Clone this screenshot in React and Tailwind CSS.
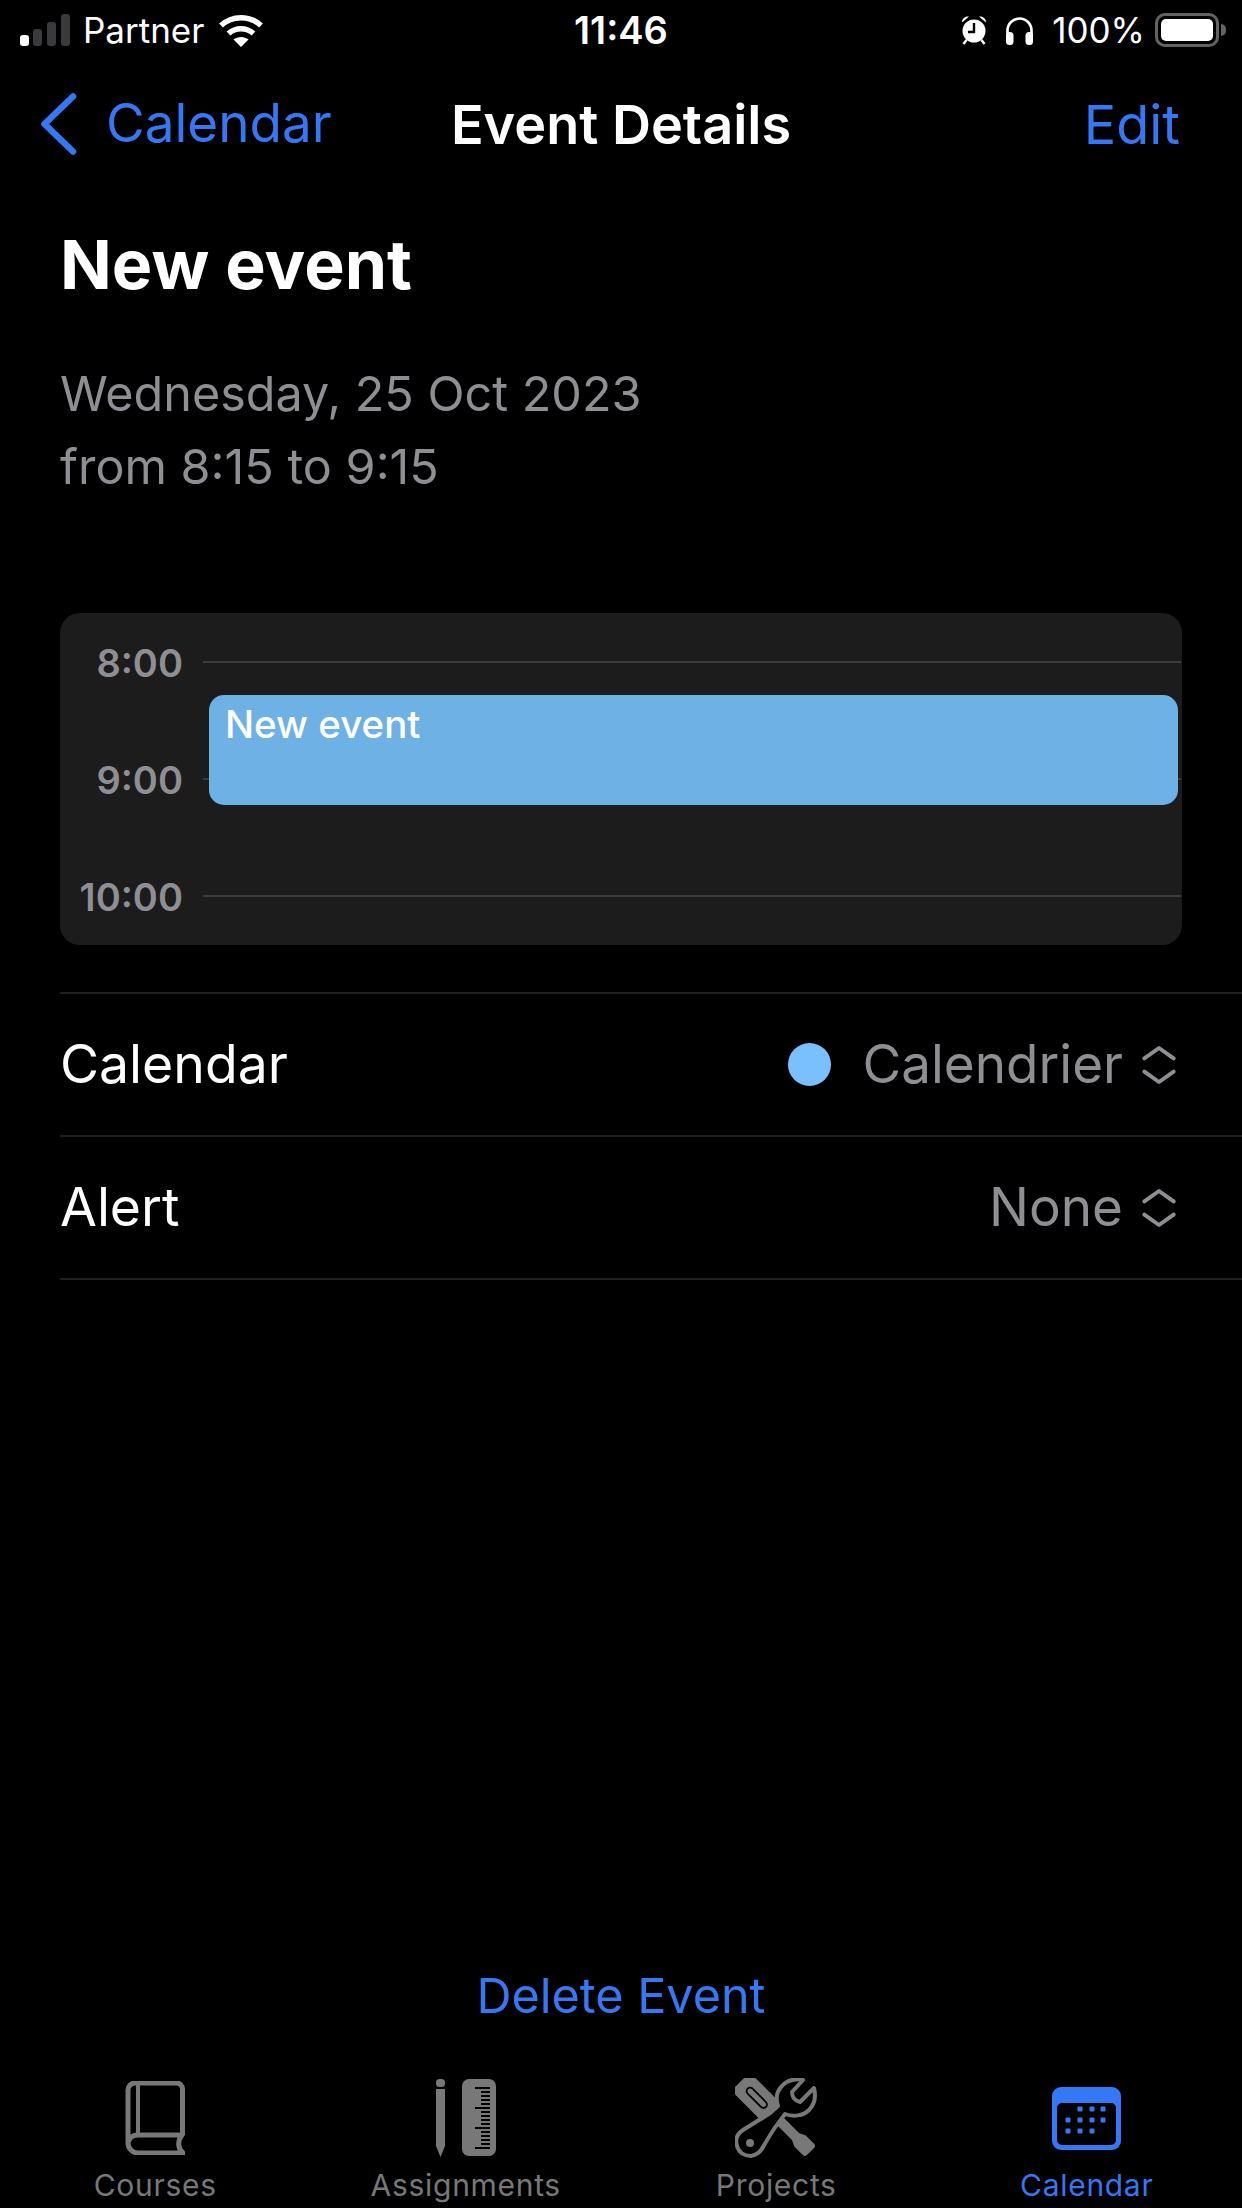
import React from "react";

const FONT = { fontFamily: "Inter, 'Noto Sans', sans-serif" };

function SignalBars() {
  return (
    <svg width="50" height="32" viewBox="0 0 50 32">
      <rect x="0" y="21" width="9" height="11" rx="3" fill="#fff" />
      <rect x="13" y="15" width="9" height="17" rx="3" fill="#3a3a3c" />
      <rect x="27" y="8" width="9" height="24" rx="3" fill="#3a3a3c" />
      <rect x="41" y="0" width="9" height="32" rx="3" fill="#3a3a3c" />
    </svg>
  );
}

function Wifi() {
  return (
    <svg width="46" height="33" viewBox="0 0 46 33" fill="none" stroke="#fff" strokeWidth="5.5">
      <path d="M3 11.5C14 1 32 1 43 11.5" />
      <path d="M10.5 19.5C17.5 13 28.5 13 35.5 19.5" />
      <path d="M23 33l-7.5-7.5c4-3.5 11-3.5 15 0z" fill="#fff" stroke="none" />
    </svg>
  );
}

function Alarm() {
  return (
    <svg width="26" height="30" viewBox="0 0 26 30">
      <circle cx="13" cy="16" r="11.5" fill="#fff" />
      <path d="M13 8v9H7" fill="none" stroke="#000" strokeWidth="2.4" />
      <path d="M1 7.500C1 3.500 4 1 8 1.500zM25 7.500C25 3.500 22 1 18 1.500z" fill="#fff" />
      <path d="M5.500 25L2.500 29M20.500 25l3 4" stroke="#fff" strokeWidth="2.400" />
    </svg>
  );
}

function Headphones() {
  return (
    <svg width="29" height="29" viewBox="0 0 29 29">
      <path d="M2.500 19V14.500a12 12 0 0 1 24 0V19" fill="none" stroke="#fff" strokeWidth="2.600" />
      <rect x="1" y="16" width="7.500" height="13" rx="3.500" fill="#fff" />
      <rect x="20.500" y="16" width="7.500" height="13" rx="3.500" fill="#fff" />
    </svg>
  );
}

function Battery() {
  return (
    <div className="flex items-center gap-[2px]">
      <div className="w-[64px] h-[34px] rounded-[10px] border-[3px] border-[#636366] p-[3px]">
        <div className="w-full h-full rounded-[5px] bg-white" />
      </div>
      <div className="w-[5px] h-[12px] rounded-r-full bg-[#636366]" />
    </div>
  );
}

function BackChevron() {
  return (
    <svg width="38" height="64" viewBox="0 0 38 64" fill="none" stroke="#3478f6" strokeWidth="6.500" strokeLinecap="round" strokeLinejoin="round">
      <path d="M33 4.500L4.500 32L33 59.500" />
    </svg>
  );
}

function UpDown() {
  return (
    <svg width="34" height="40" viewBox="0 0 36 42" fill="none" stroke="#8e8e93" strokeWidth="4.200" strokeLinecap="round" strokeLinejoin="round">
      <path d="M2.500 14L18 3l15.500 11" />
      <path d="M2.500 28L18 39l15.500-11" />
    </svg>
  );
}

function BookIcon() {
  return (
    <svg width="60" height="74" viewBox="0 0 60 74" fill="none" stroke="#787878" strokeWidth="5">
      <path d="M57.500 54V8a6 6 0 0 0-6-6H10a7 7 0 0 0-7 7v53a10 10 0 0 0 10 10h45c-5-4-6-12-1-18H13c-6 0-10 4-10 10" strokeLinejoin="round" />
      <path d="M13 2.500V54" strokeWidth="4" />
    </svg>
  );
}

function PencilRulerIcon() {
  const ticks = [0, 1, 2, 3, 4, 5, 6, 7, 8, 9, 10, 11, 12, 13, 14, 15];
  return (
    <svg width="60" height="78" viewBox="0 0 60 78">
      <rect x="0" y="0" width="9" height="8" rx="3.500" fill="#787878" />
      <path d="M0 10h9v57l-4.500 11L0 67z" fill="#787878" />
      <rect x="26" y="0" width="34" height="77" rx="7" fill="#787878" />
      {ticks.map((t) => (
        <rect key={t} x={t % 5 === 0 ? 39 : 45} y={8 + t * 4} width={t % 5 === 0 ? 15 : 9} height="2" fill="#000" />
      ))}
    </svg>
  );
}

function ToolsIcon() {
  return (
    <svg width="82" height="80" viewBox="0 0 82 80">
      <g transform="translate(14 12) rotate(45)">
        <rect x="-12" y="-13" width="56" height="26" rx="6" fill="#787878" />
        <rect x="-2" y="-3.500" width="26" height="7" rx="3.500" fill="none" stroke="#000" strokeWidth="1.800" />
        <rect x="36" y="-5" width="34" height="10" fill="#787878" />
        <path d="M66 -5L72 -8H84a3 3 0 0 1 3 3V5a3 3 0 0 1-3 3H72L66 5z" fill="#787878" />
      </g>
      <path
        d="M68 2C62 0 52 2 47 8C41 14 41 22 43 28C36 35 30 39 24 42L8 52C2 56 0 62 2 68C4 75 10 78 16 78C22 77 26 73 28 69C34 58 42 46 50 36C58 39 68 38 74 32C80 26 81 18 79 10L65 24C60 23 57 19 57 14z"
        fill="#000"
        stroke="#787878"
        strokeWidth="4"
        strokeLinejoin="round"
      />
      <circle cx="15" cy="65" r="4" fill="#787878" />
    </svg>
  );
}

function CalendarIcon() {
  const dots = [
    [28, 22], [40, 22], [51, 22],
    [16, 33], [28, 33], [40, 33], [51, 33],
    [16, 44], [28, 44], [40, 44],
  ];
  return (
    <svg width="69" height="63" viewBox="0 0 69 63">
      <path fillRule="evenodd" d="M9 0h51a9 9 0 0 1 9 9v45a9 9 0 0 1-9 9H9a9 9 0 0 1-9-9V9a9 9 0 0 1 9-9zM10 16a5 5 0 0 0-5 5v32a5 5 0 0 0 5 5h49a5 5 0 0 0 5-5V21a5 5 0 0 0-5-5z" fill="#3478f6" />
      {dots.map(([x, y]) => (
        <rect key={`${x}-${y}`} x={x - 2.500} y={y - 2.500} width="5" height="5" rx="1" fill="#3478f6" />
      ))}
    </svg>
  );
}

function HourLine({ label }) {
  return (
    <div className="flex items-center h-[24px]">
      <span className="w-[123px] mt-[2px] text-right text-[38px] leading-[24px] font-semibold text-[#8e8e93]">{label}</span>
      <div className="ml-[20px] flex-1 h-[2px] mr-[1px] bg-[#3c3c3c]" />
    </div>
  );
}

function DetailRow({ label, value, dot }) {
  return (
    <div className="flex items-center justify-between h-[143px] border-b-2 border-[#1f1f21] pr-[66px]">
      <span className="text-[53.500px] text-white">{label}</span>
      <div className="flex items-center">
        {dot && <div className="w-[43px] h-[43px] rounded-full bg-[#7ac0ff] mr-[32px]" />}
        <span className="text-[53px] text-[#8e8e93]">{value}</span>
        <div className="ml-[19px]">
          <UpDown />
        </div>
      </div>
    </div>
  );
}

function TabItem({ label, active, children }) {
  return (
    <div className="flex flex-col items-center">
      <div className="h-[80px] flex items-center justify-center">{children}</div>
      <span className={`mt-[9px] text-[30px] leading-[36px] tracking-[0.7px] ${active ? "text-[#3478f6]" : "text-[#787878]"}`}>
        {label}
      </span>
    </div>
  );
}

export default function App() {
  return (
    <div className="w-[1242px] h-[2208px] bg-black overflow-hidden flex flex-col" style={FONT}>
      {/* status bar */}
      <div className="grid grid-cols-3 items-center h-[60px] px-[20px] text-white">
        <div className="flex items-center">
          <SignalBars />
          <span className="ml-[13px] text-[35px] leading-none">Partner</span>
          <div className="ml-[14px]">
            <Wifi />
          </div>
        </div>
        <div className="text-center text-[38px] font-semibold leading-none">11:46</div>
        <div className="flex items-center justify-end gap-[18px]">
          <Alarm />
          <Headphones />
          <span className="text-[35px] leading-none">100%</span>
          <div className="-ml-[8px] -mr-[4px]">
            <Battery />
          </div>
        </div>
      </div>

      {/* nav */}
      <div className="grid grid-cols-[1fr_auto_1fr] items-center h-[128px] px-[40px]">
        <div className="flex items-center gap-[28px] text-[#3478f6] text-[53px]">
          <BackChevron />
          <span>Calendar</span>
        </div>
        <div className="text-[54px] font-semibold text-white">Event Details</div>
        <div className="text-right text-[54px] text-[#3478f6] pr-[22px]">Edit</div>
      </div>

      {/* event */}
      <div className="flex-1 pl-[60px]">
        <h1 className="mt-[36px] text-[68px] leading-[80px] font-bold text-white">New event</h1>
        <div className="mt-[53px] text-[48.500px] leading-[73px] text-[#8e8e93]">
          <div>Wednesday, 25 Oct 2023</div>
          <div>from 8:15 to 9:15</div>
        </div>

        <div className="relative mt-[110px] mr-[60px] h-[332px] rounded-[20px] bg-[#1c1c1c] pt-[37px] flex flex-col gap-[93px]">
          <HourLine label="8:00" />
          <HourLine label="9:00" />
          <HourLine label="10:00" />
          <div className="absolute left-[149px] right-[4px] top-[82px] h-[110px] rounded-[15px] bg-[#6eb1e4] px-[16px] pt-[7px] text-[38.500px] leading-[44px] font-medium text-white">
            New event
          </div>
        </div>

        <div className="mt-[47px] border-t-2 border-[#1f1f21]">
          <DetailRow label="Calendar" value="Calendrier" dot />
          <DetailRow label="Alert" value="None" />
        </div>
      </div>

      {/* delete */}
      <div className="text-center text-[48.500px] leading-[60px] text-[#3478f6] mb-[52px]">Delete Event</div>

      {/* tab bar */}
      <div className="grid grid-cols-4 h-[130px] pb-[4px]">
        <TabItem label="Courses">
          <BookIcon />
        </TabItem>
        <TabItem label="Assignments">
          <PencilRulerIcon />
        </TabItem>
        <TabItem label="Projects">
          <ToolsIcon />
        </TabItem>
        <TabItem label="Calendar" active>
          <CalendarIcon />
        </TabItem>
      </div>
    </div>
  );
}
